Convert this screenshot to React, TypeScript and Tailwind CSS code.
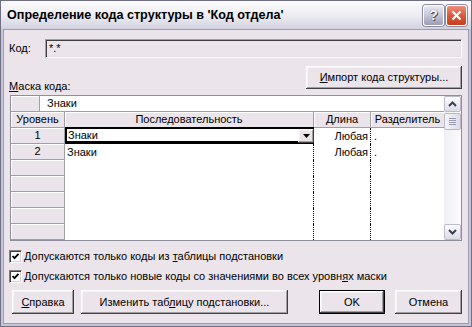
import React from "react";

const btn3d =
  "shadow-[inset_-1px_-1px_#404040,inset_1px_1px_#ffffff,inset_-2px_-2px_#a0a0a0,inset_2px_2px_#f6f2f6]";

function U({ children }: { children: React.ReactNode }) {
  return <span className="underline underline-offset-[1px]">{children}</span>;
}

function ScrollBtn({ down }: { down?: boolean }) {
  return (
    <div className="h-[16px] w-[17px] rounded-[2px] border border-[#bdbccd] bg-linear-to-b from-[#fdfdfe] to-[#dcdce6] flex items-center justify-center">
      <svg width="9" height="6" viewBox="0 0 9 6">
        {down ? (
          <polyline points="1,1 4.5,4.5 8,1" fill="none" stroke="#3e3e5a" strokeWidth="2" />
        ) : (
          <polyline points="1,5 4.5,1.5 8,5" fill="none" stroke="#3e3e5a" strokeWidth="2" />
        )}
      </svg>
    </div>
  );
}

function CheckBox() {
  return (
    <div className="w-[13px] h-[13px] bg-white border-t border-l border-[#808080] border-r border-b border-r-white border-b-white shadow-[inset_1px_1px_#404040,inset_-1px_-1px_#d8d2d8] flex items-center justify-center">
      <svg width="9" height="9" viewBox="0 0 9 9">
        <polyline points="1.5,4 3.5,6.2 7.5,1.8" fill="none" stroke="#000" strokeWidth="1.8" />
      </svg>
    </div>
  );
}

export default function App() {
  const rows = [
    { n: "1", seq: "Знаки", len: "Любая", sep: "." },
    { n: "2", seq: "Знаки", len: "Любая", sep: "." },
    { n: "", seq: "", len: "", sep: "" },
    { n: "", seq: "", len: "", sep: "" },
    { n: "", seq: "", len: "", sep: "" },
    { n: "", seq: "", len: "", sep: "" },
    { n: "", seq: "", len: "", sep: "" },
  ];
  return (
    <div className="w-[472px] h-[327px] flex flex-col border border-[#6e6e84] bg-[#c6c5d7] text-[11px] leading-[13px] text-black font-['Liberation_Sans',sans-serif]">
      {/* Title bar */}
      <div className="h-[28px] shrink-0 flex items-center pl-[6px] pr-[4px] bg-linear-to-b from-[#fbfbfd] via-[#eeeef3] to-[#d2d1df]">
        <span className="flex-1 font-bold text-[12.6px] leading-[16px]">
          Определение кода структуры в 'Код отдела'
        </span>
        <div className="flex gap-[2px]">
          <div className="w-[21px] h-[21px] rounded-[3px] border border-[#ffffff] shadow-[0_0_0_1px_#8d8ca6] bg-linear-to-b from-[#e9e9f2] via-[#c6c6d8] to-[#9d9cb6] flex items-center justify-center">
            <span className="text-white font-bold text-[14px] leading-[14px] [text-shadow:0_0_1px_#333,1px_1px_0_#555]">?</span>
          </div>
          <div className="w-[21px] h-[21px] rounded-[3px] border border-[#ffffff] shadow-[0_0_0_1px_#8d8ca6] bg-linear-to-b from-[#ec8d78] via-[#d85a3c] to-[#c2401e] flex items-center justify-center">
            <svg width="11" height="11" viewBox="0 0 11 11">
              <path d="M1.5 1.5 L9.5 9.5 M9.5 1.5 L1.5 9.5" stroke="#fff" strokeWidth="2" />
            </svg>
          </div>
        </div>
      </div>

      {/* Body */}
      <div className="flex-1 mx-[2px] mb-[2px] border border-[#9d9cb2] bg-[#ebe4ea] flex flex-col pl-[5px] pr-[6px] pt-[9px]">
        {/* Код row */}
        <div className="flex items-center h-[19px]">
          <span className="w-[36px]">Код:</span>
          <div className="flex-1 h-[19px] pl-[3px] flex items-center border-t border-l border-[#a0a0a0] border-r border-b border-r-white border-b-white shadow-[inset_1px_1px_#404040,inset_-1px_-1px_#e3dee3]">
            *.*
          </div>
        </div>

        {/* Mask label + import button */}
        <div className="mt-[8px] h-[29px] flex justify-between items-start">
          <span className="mt-[14px]">
            <U>М</U>аска кода:
          </span>
          <div className={`w-[156px] h-[23px] flex items-center justify-center ${btn3d}`}>
            <span>
              <U>И</U>мпорт кода структуры...
            </span>
          </div>
        </div>

        {/* Grid */}
        <div className="ml-[1px] h-[146px] border border-[#8f8f9c] flex bg-white">
          <div className="w-[433px] flex flex-col">
            {/* Row 0 */}
            <div className="h-[16px] flex border-b border-[#a0a0a0]">
              <div className="w-[29px] bg-[#ebe4ea] border-r border-[#a0a0a0] shadow-[inset_1px_1px_#ffffff]" />
              <div className="flex-1 pl-[7px] flex items-center">Знаки</div>
            </div>
            {/* Header */}
            <div className="h-[16px] flex bg-[#ebe4ea]">
              <div className="w-[54px] border-r border-b border-[#a0a0a0] shadow-[inset_1px_1px_#ffffff] flex items-center justify-center">
                Уровень
              </div>
              <div className="w-[249px] border-r border-b border-[#a0a0a0] shadow-[inset_1px_1px_#ffffff] flex items-center justify-center">
                Последовательность
              </div>
              <div className="w-[57px] border-r border-b border-[#a0a0a0] shadow-[inset_1px_1px_#ffffff] flex items-center justify-center">
                Длина
              </div>
              <div className="w-[73px] border-b border-[#a0a0a0] shadow-[inset_1px_1px_#ffffff] flex items-center justify-center whitespace-nowrap">
                Разделитель
              </div>
            </div>
            {/* Data rows */}
            {rows.map((r, i) => (
              <div key={i} className="h-[16px] flex">
                <div className="w-[54px] bg-[#ebe4ea] border-r border-b border-[#a0a0a0] shadow-[inset_1px_1px_#ffffff] flex items-center justify-center">
                  {r.n}
                </div>
                {i === 0 ? (
                  <div className="w-[249px] -mt-[1px] h-[17px] flex border-t-2 border-l-2 border-b-[3px] border-black">
                    <div className="flex-1 pl-[1px] flex items-center">{r.seq}</div>
                    <div className={`w-[16px] h-[14px] bg-[#ebe4ea] flex items-center justify-center ${btn3d}`}>
                      <svg width="7" height="4" viewBox="0 0 7 4">
                        <polygon points="0,0 7,0 3.5,4" fill="#000" />
                      </svg>
                    </div>
                  </div>
                ) : (
                  <div className="w-[249px] border-r border-dotted border-black pl-[2px] flex items-center">
                    {r.seq}
                  </div>
                )}
                <div className="w-[57px] border-r border-dotted border-black pr-[2px] flex items-center justify-end">
                  {r.len}
                </div>
                <div className="w-[73px] pl-[3px] flex items-center">{r.sep}</div>
              </div>
            ))}
          </div>
          {/* Scrollbar */}
          <div className="w-[17px] flex flex-col bg-linear-to-r from-[#eeeef4] to-[#fcfcfe]">
            <ScrollBtn />
            <div className="mt-[1px] h-[17px] rounded-[2px] border border-[#b9b9ca] bg-linear-to-r from-[#f4f4f8] to-[#dcdce8] flex flex-col items-center justify-center gap-[1px]">
              <div className="w-[7px] h-[1px] bg-[#9a9ab0]" />
              <div className="w-[7px] h-[1px] bg-[#9a9ab0]" />
              <div className="w-[7px] h-[1px] bg-[#9a9ab0]" />
              <div className="w-[7px] h-[1px] bg-[#9a9ab0]" />
            </div>
            <div className="flex-1" />
            <ScrollBtn down />
          </div>
        </div>

        {/* Checkboxes */}
        <div className="mt-[9px] flex items-center gap-[2px] h-[13px]">
          <CheckBox />
          <span>
            Допускаются только коды из <U>т</U>аблицы подстановки
          </span>
        </div>
        <div className="mt-[7px] flex items-center gap-[2px] h-[13px]">
          <CheckBox />
          <span>
            Допускаются только новые коды со значениями во всех уровн<U>я</U>х маски
          </span>
        </div>

        {/* Buttons */}
        <div className="mt-[7px] flex h-[24px]">
          <div className={`ml-[3px] w-[62px] h-[24px] flex items-center justify-center ${btn3d}`}>
            <span>
              <U>С</U>правка
            </span>
          </div>
          <div className={`ml-[7px] w-[207px] h-[24px] flex items-center justify-center ${btn3d}`}>
            <span>
              Изменить таб<U>л</U>ицу подстановки...
            </span>
          </div>
          <div className="ml-[31px] w-[66px] h-[24px] border border-black">
            <div className={`w-full h-full flex items-center justify-center ${btn3d}`}>OK</div>
          </div>
          <div className={`ml-[10px] w-[67px] h-[24px] flex items-center justify-center ${btn3d}`}>
            Отмена
          </div>
        </div>
      </div>
    </div>
  );
}
